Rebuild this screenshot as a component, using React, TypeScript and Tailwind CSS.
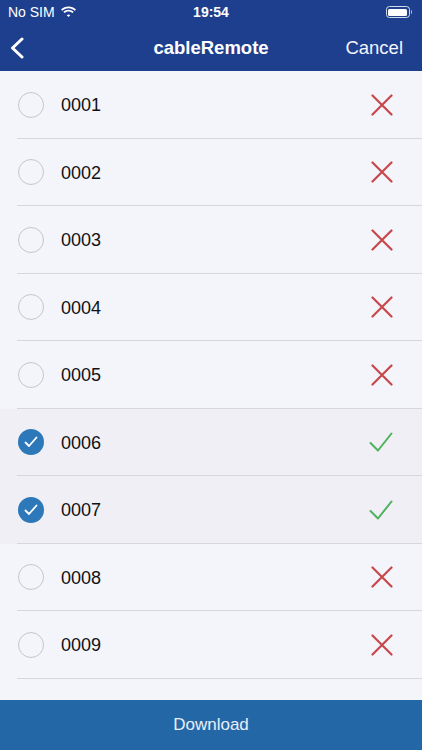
import React from 'react';

const items = [
  { id: '0001', on: false },
  { id: '0002', on: false },
  { id: '0003', on: false },
  { id: '0004', on: false },
  { id: '0005', on: false },
  { id: '0006', on: true },
  { id: '0007', on: true },
  { id: '0008', on: false },
  { id: '0009', on: false },
];

const font = { fontFamily: '"Liberation Sans", Arial, sans-serif' };

const Wifi = () => (
  <svg width="17" height="12" viewBox="0 0 17 12" fill="white">
    <path d="M8.5 2.2c2.4 0 4.6.9 6.3 2.5l1.2-1.2C14 1.6 11.4.5 8.5.5S3 1.6 1 3.5l1.2 1.2C3.9 3.1 6.1 2.2 8.5 2.2z" />
    <path d="M8.5 5.4c1.5 0 2.9.6 4 1.6l1.2-1.2C12.3 4.5 10.5 3.7 8.5 3.7S4.7 4.5 3.3 5.8L4.5 7c1.1-1 2.5-1.6 4-1.6z" />
    <path d="M8.5 8.5c.7 0 1.3.3 1.8.7l-1.8 1.9-1.8-1.9c.5-.4 1.1-.7 1.8-.7z" />
  </svg>
);

const Battery = () => (
  <div className="flex items-center">
    <div className="w-[24px] h-[12px] rounded-[3.5px] border border-white/80 p-[1.5px]">
      <div className="w-full h-full rounded-[1.5px] bg-white" />
    </div>
    <div className="w-[1.5px] h-[4px] bg-white/60 rounded-r-sm ml-[1px]" />
  </div>
);

const Cross = () => (
  <svg width="22" height="22" viewBox="0 0 22 22" fill="none" stroke="#c8474b" strokeWidth="2.2" strokeLinecap="round">
    <path d="M1.5 1.5L20.5 20.5M20.5 1.5L1.5 20.5" />
  </svg>
);

const Tick = () => (
  <svg width="24" height="22" viewBox="0 0 24 22" fill="none" stroke="#4db25c" strokeWidth="2" strokeLinecap="round" strokeLinejoin="round">
    <path d="M1.5 12L9 19.5L22.5 2.5" />
  </svg>
);

export default function App() {
  return (
    <div className="w-[422px] h-[750px] flex flex-col bg-[#f4f4fb] overflow-hidden" style={font}>
      {/* status + nav */}
      <div className="bg-[#1e3f8e] text-white">
        <div className="h-[24px] flex items-center px-[8px] relative">
          <div className="flex items-center gap-[5px] text-[14px]">
            <span>No SIM</span>
            <Wifi />
          </div>
          <div className="absolute left-0 right-0 text-center text-[14px] font-bold">19:54</div>
          <div className="ml-auto mr-[2px]">
            <Battery />
          </div>
        </div>
        <div className="h-[47px] flex items-center relative">
          <svg className="ml-[9px]" width="16" height="22" viewBox="0 0 16 22" fill="none" stroke="white" strokeWidth="3" strokeLinecap="round" strokeLinejoin="round">
            <path d="M13 2L3.5 11L13 20" />
          </svg>
          <div className="absolute left-0 right-0 text-center text-[18.5px] font-bold pointer-events-none">cableRemote</div>
          <span className="ml-auto mr-[19px] text-[18.5px] text-[#f3f5fb]">Cancel</span>
        </div>
      </div>

      {/* list */}
      <div className="flex-1 overflow-hidden">
        {items.map((it) => (
          <div key={it.id} className={`h-[67.5px] pl-[17px] ${it.on ? 'bg-[#efeff5]' : 'bg-[#f4f4fb]'}`}>
            <div className="h-full flex items-center border-b border-[#d6d6db] pr-[29px] pt-[1px]">
              <div className="w-[44px] flex items-center pl-[1px]">
                {it.on ? (
                  <div className="w-[26px] h-[26px] rounded-full bg-[#2d78b8] flex items-center justify-center">
                    <svg width="14" height="12" viewBox="0 0 14 12" fill="none" stroke="white" strokeWidth="1.8" strokeLinecap="round" strokeLinejoin="round">
                      <path d="M1.5 6.5L5 10L12.5 1.5" />
                    </svg>
                  </div>
                ) : (
                  <div className="w-[26px] h-[26px] rounded-full border-[1.5px] border-[#c5c5ca]" />
                )}
              </div>
              <span className="flex-1 text-[18px] text-[#111] pt-[2px]">{it.id}</span>
              {it.on ? <Tick /> : <Cross />}
            </div>
          </div>
        ))}
      </div>

      {/* bottom */}
      <div className="h-[50px] bg-[#2467a7] flex items-center justify-center text-[17px] text-[#e8eef7]">
        Download
      </div>
    </div>
  );
}
